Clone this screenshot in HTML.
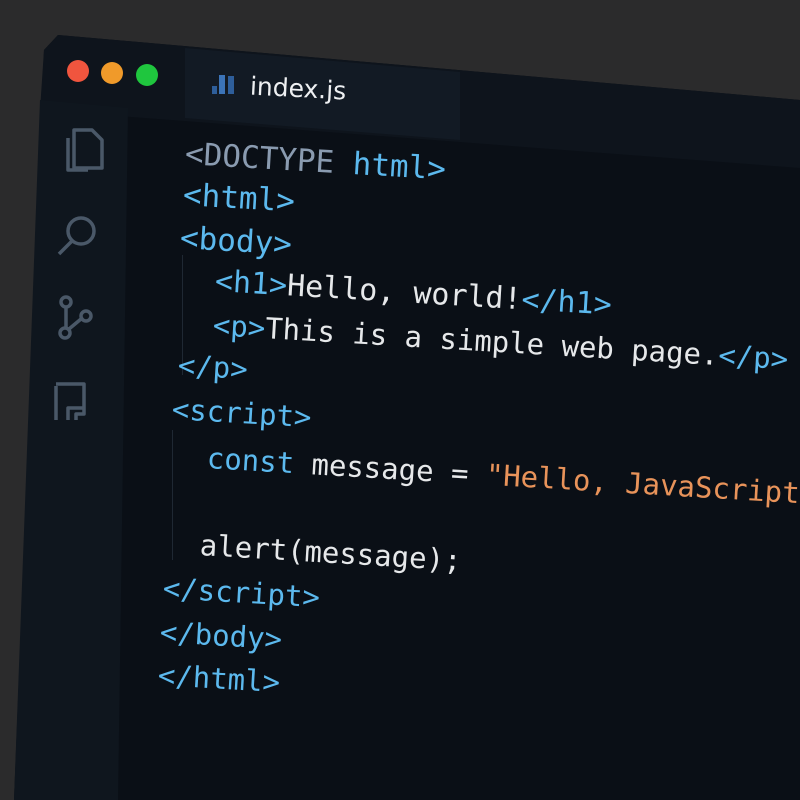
<!DOCTYPE html>
<html><head><style>
body{margin:0;width:800px;height:800px;background:#2b2b2c;overflow:hidden;position:relative;font-family:"DejaVu Sans Mono","Liberation Mono",monospace}
.win{position:absolute;left:0;top:0;width:800px;height:800px;background:#0a0f16;clip-path:polygon(58px 35px,800px 100px,800px 800px,14px 800px,44px 50px)}
.title{position:absolute;left:0;top:0;width:800px;height:800px;background:#0e141c;clip-path:polygon(58px 35px,800px 100px,800px 168px,40px 110px,44px 50px)}
.tab{position:absolute;left:0;top:0;width:800px;height:800px;background:#121a24;clip-path:polygon(185px 48px,460px 72px,460px 140px,185px 118px)}
.side{position:absolute;left:0;top:0;width:800px;height:800px;background:#0f161e;clip-path:polygon(40px 100px,128px 108px,118px 800px,14px 800px)}
.dot{position:absolute;width:22px;height:22px;border-radius:50%}
.l{position:absolute;white-space:pre;transform:rotate(3.4deg);transform-origin:0 50%;line-height:1.2;color:#e6e8ea}
.t{color:#5cb9ee}.d{color:#8a9bb0}.s{color:#e8935a}
.g{position:absolute;width:1px;background:#1f2833}
</style></head><body>
<div class="win"></div><div class="title"></div><div class="tab"></div><div class="side"></div>
<div class="dot" style="left:67px;top:60px;background:#f0553e"></div>
<div class="dot" style="left:101px;top:62px;background:#f09a2a"></div>
<div class="dot" style="left:136px;top:64px;background:#1fc63e"></div>
<svg style="position:absolute;left:210px;top:72px" width="30" height="26"><rect x="2" y="14" width="5" height="8" fill="#2e5e9a"/><rect x="9" y="3" width="6" height="19" fill="#3c74b8"/><rect x="18" y="4" width="6" height="18" fill="#2e5e9a"/></svg>
<div style="position:absolute;left:250px;top:74px;font-family:'DejaVu Sans','Liberation Sans',sans-serif;font-size:25px;color:#eef0f2;transform:rotate(3deg)">index.js</div>
<svg style="position:absolute;left:50px;top:120px" width="70" height="300" fill="none" stroke="#4a5868" stroke-width="3.5" stroke-linejoin="round">
<path d="M18 18 v32 h20"/><path d="M24 10 h18 l10 10 v28 h-28 z"/>
<circle cx="31" cy="111" r="13"/><path d="M22 121 l-13 13"/>
<circle cx="16" cy="182" r="5"/><circle cx="36" cy="196" r="5"/><circle cx="15" cy="213" r="5"/><path d="M16 187 v21 M31 199 l-12 10"/>
<path d="M6 266 v36 h20 v-8 h8 v-30 h-28 M18 302 v-14 h16"/>
</svg>
<div class="g" style="left:182px;top:255px;height:120px"></div>
<div class="g" style="left:172px;top:430px;height:130px"></div>
<div class="l" style="left:185px;top:136px;font-size:31px"><span class="d">&lt;DOCTYPE </span><span class="t">html&gt;</span></div>
<div class="l t" style="left:183px;top:177px;font-size:31px">&lt;html&gt;</div>
<div class="l t" style="left:180px;top:220px;font-size:31px">&lt;body&gt;</div>
<div class="l" style="left:215px;top:264px;font-size:30px"><span class="t">&lt;h1&gt;</span>Hello, world!<span class="t">&lt;/h1&gt;</span></div>
<div class="l" style="left:213px;top:308px;font-size:29px"><span class="t">&lt;p&gt;</span>This is a simple web page.<span class="t">&lt;/p&gt;</span></div>
<div class="l t" style="left:178px;top:348px;font-size:29px">&lt;/p&gt;</div>
<div class="l t" style="left:172px;top:392px;font-size:29px">&lt;script&gt;</div>
<div class="l" style="left:207px;top:441px;font-size:29px"><span class="t">const</span> message = <span class="s">"Hello, JavaScript"</span></div>
<div class="l" style="left:200px;top:528px;font-size:29px">alert(message);</div>
<div class="l t" style="left:163px;top:571px;font-size:29px">&lt;/script&gt;</div>
<div class="l t" style="left:160px;top:615px;font-size:29px">&lt;/body&gt;</div>
<div class="l t" style="left:158px;top:658px;font-size:29px">&lt;/html&gt;</div>
</body></html>
